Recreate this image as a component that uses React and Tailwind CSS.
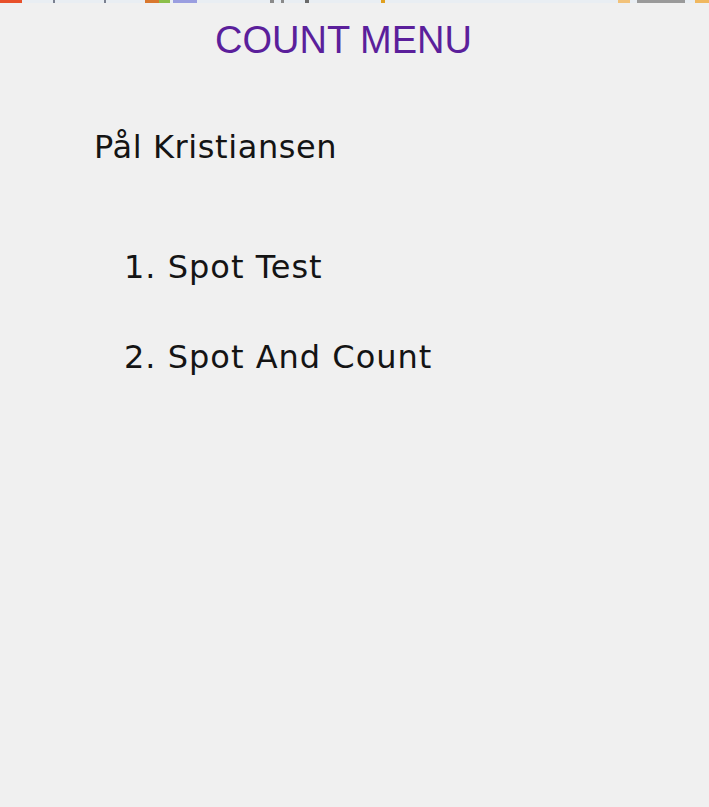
import React from 'react';

const strip = [
  { left: 0, width: 22, color: 'bg-[#e8502a]' },
  { left: 53, width: 2, color: 'bg-[#7a8090]' },
  { left: 104, width: 2, color: 'bg-[#7a8090]' },
  { left: 145, width: 14, color: 'bg-[#d9782e]' },
  { left: 159, width: 11, color: 'bg-[#8cbf4a]' },
  { left: 173, width: 24, color: 'bg-[#9a9ee0]' },
  { left: 270, width: 4, color: 'bg-[#8a8a8a]' },
  { left: 281, width: 3, color: 'bg-[#8a8a8a]' },
  { left: 305, width: 4, color: 'bg-[#6a6a6a]' },
  { left: 381, width: 4, color: 'bg-[#e0a020]' },
  { left: 618, width: 12, color: 'bg-[#f2c27a]' },
  { left: 637, width: 48, color: 'bg-[#9a9a9a]' },
  { left: 695, width: 14, color: 'bg-[#f0b860]' },
];

const items = ['1. Spot Test', '2. Spot And Count'];

const App = () => {
  return (
    <div className="w-[709px] h-[807px] bg-[#f0f0f0] overflow-hidden">
      {/* cut-off toolbar */}
      <div className="relative h-[3px] bg-[#e9eef3]">
        {strip.map((s, i) => (
          <div
            key={i}
            className={`absolute top-0 h-[3px] ${s.color}`}
            style={{ left: s.left, width: s.width }}
          />
        ))}
      </div>

      <h1 className="pt-[15px] pr-[22px] text-center font-['Liberation_Sans',Arial,sans-serif] text-[38px] leading-[44px] text-[#5b1f9b]">
        COUNT MENU
      </h1>

      <div className="font-['DejaVu_Sans',Tahoma,sans-serif] text-[#141414]">
        <p className="mt-[65px] pl-[94px] text-[32px] leading-[40px] tracking-[0.6px]">Pål Kristiansen</p>
        <ol className="mt-[80px] pl-[124px] flex flex-col gap-[50px] tracking-[1px]">
          {items.map((item) => (
            <li key={item} className="text-[32px] leading-[40px]">{item}</li>
          ))}
        </ol>
      </div>
    </div>
  );
};

export default App;
